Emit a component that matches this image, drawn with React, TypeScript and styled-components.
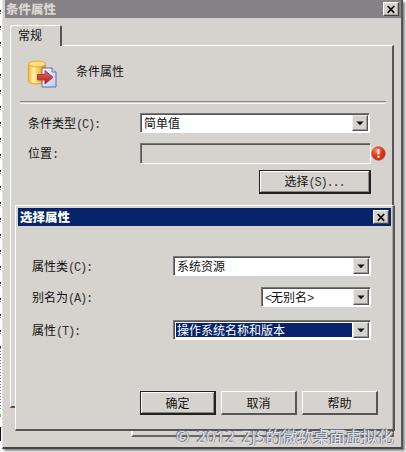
import React from "react";
import styled, { createGlobalStyle } from "styled-components";

const face = "#d6d3ce";

const GlobalStyle = createGlobalStyle`
  * { box-sizing: border-box; }
  html, body { margin: 0; overflow: hidden; background: #fff; }
  body { font: 12px/14px "Noto Sans CJK SC", sans-serif; color: #111; }
`;

const Desktop = styled.main`
  position: relative;
  width: 406px;
  height: 452px;
  padding-left: 2px;
  overflow: hidden;
  background:
    repeating-linear-gradient(to bottom, #777 0 1px, #fff 1px 3px) 0 348px / 1px 62px no-repeat,
    linear-gradient(#58d43e, #58d43e) 0 414px / 1px 3px no-repeat,
    linear-gradient(#111, #111) 0 427px / 1px 14px no-repeat,
    repeating-linear-gradient(to bottom, #fff 0 10px, #333 10px 12px, #fff 12px 13px, #777 13px 14px, #fff 14px 16px) 0 0 / 1px 348px no-repeat,
    #fff;
`;

const Window = styled.section`
  width: 401px;
  height: 449px;
  padding-left: 2px;
  background: ${face};
  border-left: 1px solid #e5e3df;
  border-right: 2px solid #555;
  border-bottom: 2px solid #454545;
  box-shadow: 2px 2px 2px #888;
`;

const TitleBar = styled.header<{ $active?: boolean }>`
  display: flex;
  align-items: center;
  justify-content: space-between;
  height: 18px;
  padding: 0 2px 0 ${(p) => (p.$active ? 2 : 1)}px;
  background: ${(p) => (p.$active ? "#07236b" : "#858185")};
  color: ${(p) => (p.$active ? "#fff" : "#d8d5d0")};
  font-weight: 800;
  font-size: 12.5px;
`;

const MainTitle = styled(TitleBar)`
  width: 396px;
`;

const CloseButton = styled.button`
  display: grid;
  place-items: center;
  width: 16px;
  height: 14px;
  padding: 0;
  background: ${face};
  border: 1px solid;
  border-color: #fff #444 #444 #fff;
  box-shadow: inset -1px -1px #aaa7a3;
`;

const TabStrip = styled.div`
  height: 27px;
  padding: 7px 0 0 5px;
`;

const Tab = styled.div`
  width: 52px;
  height: 21px;
  padding: 2px 0 0 7px;
  background: ${face};
  position: relative;
  border-top: 1px solid #fff;
  border-left: 1px solid #fff;
  border-right: 2px solid #555;
  border-radius: 3px 2px 0 0;
`;

const Panel = styled.section`
  width: 384px;
  height: 363px;
  margin-left: 5px;
  padding: 13px 7px 0 9px;
  border: 1px solid #fff;
  border-right: 2px solid #555;
  border-bottom: 2px solid #555;
`;

const Heading = styled.div`
  display: flex;
  gap: 18px;
  height: 42px;
  padding-left: 7px;
  span { padding-top: 5px; }
`;

const Divider = styled.div`
  height: 3px;
  border-top: 1px solid #888;
  border-bottom: 1px solid #f5f4f2;
  width: 366px;
`;

const FormRow = styled.div<{ $label: number; $top: number; $h?: number }>`
  display: grid;
  grid-template-columns: ${(p) => p.$label}px auto;
  justify-content: start;
  align-items: center;
  height: ${(p) => p.$h ?? 20}px;
  margin-top: ${(p) => p.$top}px;
`;

const Label = styled.span<{ $indent?: number }>`
  padding-left: ${(p) => p.$indent ?? 0}px;
`;

const Latin = styled.span`
  font: 12px/12px "Liberation Mono", monospace;
  letter-spacing: -1.2px;
  color: #333;
`;

const Field = styled.div<{ $w: number; $h?: number; $disabled?: boolean }>`
  display: flex;
  width: ${(p) => p.$w}px;
  height: ${(p) => p.$h ?? 20}px;
  padding: 1px;
  background: ${(p) => (p.$disabled ? face : "#fff")};
  border: 1px solid;
  border-color: #777 #fff #fff #777;
  box-shadow: inset 1px 1px #555;
`;

const Value = styled.span<{ $selected?: boolean }>`
  flex: 1;
  align-self: stretch;
  margin: 1px;
  padding-left: 1px;
  white-space: nowrap;
  background: ${(p) => (p.$selected ? "#07236b" : "transparent")};
  color: ${(p) => (p.$selected ? "#fff" : "#111")};
`;

const Drop = styled.span`
  display: grid;
  place-items: center;
  width: 16px;
  background: ${face};
  border: 1px solid;
  border-color: #eee #555 #555 #eee;
  box-shadow: inset -1px -1px #999;
`;

const ErrorField = styled.div`
  display: flex;
  align-items: center;
`;

const Button = styled.button<{ $w: number; $default?: boolean }>`
  flex: none;
  width: ${(p) => p.$w}px;
  height: 24px;
  padding: 0;
  font: inherit;
  color: #111;
  background: ${face};
  border-style: solid;
  border-width: 1px 2px 2px 1px;
  border-color: ${(p) => (p.$default ? "#222" : "#fff #555 #555 #fff")};
  box-shadow: ${(p) => (p.$default ? "inset 1px 1px #fff, inset -1px -1px #8b8986" : "none")};
`;

const SelectRow = styled.div`
  display: flex;
  justify-content: flex-end;
  padding: 6px 14px 0 0;
`;

const Footer = styled.div`
  width: 263px;
  height: 7px;
  margin: 22px 0 0 126px;
  border-left: 2px solid #fff;
  border-right: 2px solid #555;
  border-bottom: 2px solid #666;
`;

const Dialog = styled.section`
  position: absolute;
  left: 15px;
  top: 205px;
  width: 380px;
  height: 226px;
  padding: 2px;
  background: ${face};
  border: 1px solid #fff;
  border-right: 2px solid #555;
  border-bottom: 2px solid #555;
  box-shadow: inset -1px 0 #aaa;
`;

const DialogBody = styled.div`
  padding: 30px 10px 0 13px;
`;

const AliasField = styled.div`
  width: 198px;
  display: flex;
  justify-content: flex-end;
`;

const Actions = styled.div`
  display: flex;
  gap: 5px;
  margin: 51px 0 0 109px;
`;

const Watermark = styled.div`
  position: absolute;
  left: 176px;
  top: 427px;
  width: 225px;
  font: 400 16px/21px "Open Sans", "Noto Sans CJK SC", sans-serif;
  white-space: nowrap;
  color: #dfe2eb;
  text-shadow: -1px -1px 0 #6d7180, 1px 0 0 #a39b94;
`;

const WatermarkLatin = styled.span`
  letter-spacing: 0.4px;
  word-spacing: 2.5px;
`;

const Cross = () => (
  <svg width="10" height="9" viewBox="0 0 10 9">
    <path d="M1.7 1 8.2 7.8M8.2 1 1.7 7.8" stroke="#111" strokeWidth="1.8" />
  </svg>
);

const Arrow = () => (
  <svg width="8" height="5" viewBox="0 0 8 5"><path d="M.3.5h7.4L4 4.3Z" fill="#111" /></svg>
);

const DatabaseIcon = () => (
  <svg width="31" height="31" viewBox="0 0 31 31">
    <defs>
      <linearGradient id="gold"><stop stopColor="#f8b72a" /><stop offset=".3" stopColor="#fff2ad" /><stop offset=".65" stopColor="#fcc332" /><stop offset="1" stopColor="#d88a13" /></linearGradient>
      <linearGradient id="page" x2="1" y2="1"><stop stopColor="#fff" /><stop offset="1" stopColor="#b9cdf0" /></linearGradient>
      <linearGradient id="red" x2="0" y2="1"><stop stopColor="#e8736c" /><stop offset="1" stopColor="#a81719" /></linearGradient>
    </defs>
    <path d="M1.5 5v17c0 4 17 4 17 0V5" fill="url(#gold)" stroke="#e0a02c" />
    <ellipse cx="10" cy="5" rx="8.5" ry="3" fill="#ffe08a" stroke="#e4a72f" />
    <path d="M15 9h10l4 4v15H15Z" fill="url(#page)" stroke="#5872b0" />
    <path d="M25 9v4h4" fill="#d8e4ff" stroke="#5872b0" />
    <path d="M10.5 15.5H18V11.5l8 6.8L18 25v-4h-7.5Z" fill="url(#red)" stroke="#b93336" />
  </svg>
);

const ErrorIcon = () => (
  <svg width="15" height="15" viewBox="0 0 15 15">
    <defs><radialGradient id="alert" cx=".38" cy=".28"><stop stopColor="#ff9a78" /><stop offset=".5" stopColor="#f4532a" /><stop offset="1" stopColor="#d03212" /></radialGradient></defs>
    <circle cx="7.5" cy="7.5" r="6.8" fill="url(#alert)" stroke="#ba4a35" strokeWidth=".7" />
    <path d="M7.5 3v5.2M7.5 9.8v2" stroke="#fff" strokeWidth="2" />
  </svg>
);

const Close = () => <CloseButton aria-label="关闭"><Cross /></CloseButton>;

const Combo = ({ w, selected, children }: { w: number; selected?: boolean; children: React.ReactNode }) => (
  <Field $w={w}><Value $selected={selected}>{children}</Value><Drop><Arrow /></Drop></Field>
);

export default function App() {
  return (
    <>
      <GlobalStyle />
      <Desktop>
        <Window>
          <MainTitle><span>条件属性</span><Close /></MainTitle>
          <TabStrip><Tab>常规</Tab></TabStrip>
          <Panel>
            <Heading><DatabaseIcon /><span>条件属性</span></Heading>
            <Divider />
            <FormRow $label={120} $top={9}><Label $indent={8}>条件类型<Latin>(C):</Latin></Label><Combo w={230}>简单值</Combo></FormRow>
            <FormRow $label={120} $top={10} $h={21}>
              <Label $indent={8}>位置<Latin>:</Latin></Label>
              <ErrorField><Field $w={231} $h={21} $disabled /><ErrorIcon /></ErrorField>
            </FormRow>
            <SelectRow><Button $w={112} $default>选择<Latin>(S)...</Latin></Button></SelectRow>
          </Panel>
          <Footer />
        </Window>
        <Dialog>
          <TitleBar $active><span>选择属性</span><Close /></TitleBar>
          <DialogBody>
            <FormRow $label={142} $top={0}><Label $indent={1}>属性类<Latin>(C):</Latin></Label><Combo w={198}>系统资源</Combo></FormRow>
            <FormRow $label={142} $top={11}>
              <Label $indent={1}>别名为<Latin>(A):</Latin></Label>
              <AliasField><Combo w={110}><Latin>&lt;</Latin>无别名<Latin>&gt;</Latin></Combo></AliasField>
            </FormRow>
            <FormRow $label={142} $top={13}><Label $indent={1}>属性<Latin>(T):</Latin></Label><Combo w={198} selected>操作系统名称和版本</Combo></FormRow>
            <Actions><Button $w={76} $default>确定</Button><Button $w={76}>取消</Button><Button $w={76}>帮助</Button></Actions>
          </DialogBody>
        </Dialog>
        <Watermark><WatermarkLatin>© 2012 ZJS</WatermarkLatin>的微软桌面虚拟化</Watermark>
      </Desktop>
    </>
  );
}
